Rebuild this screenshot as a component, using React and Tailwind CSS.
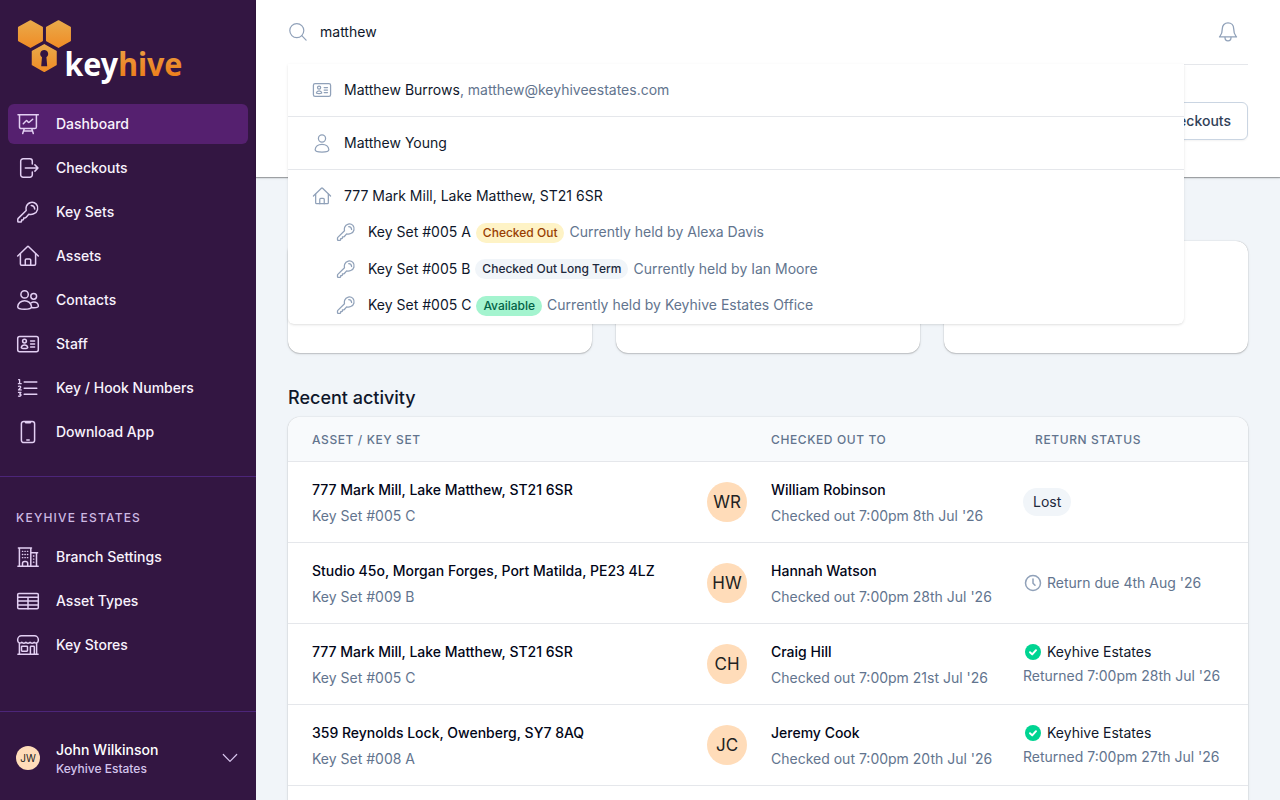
import React from "react";

const Icon = ({ className = "size-6", sw = 1.5, children }) => (
  <svg
    className={"shrink-0 " + className}
    viewBox="0 0 24 24"
    fill="none"
    stroke="currentColor"
    strokeWidth={sw}
    strokeLinecap="round"
    strokeLinejoin="round"
  >
    {children}
  </svg>
);

const shapes = {
  board: (
    <>
      <path d="M2 2.7h20.3M3.5 2.7v12.2a1.7 1.7 0 0 0 1.7 1.7h13.5a1.7 1.7 0 0 0 1.7-1.7V2.7" />
      <path d="M7.3 11.7l2.9-2.9a.5.5 0 0 1 .8 0l1.3 1.4a.6.6 0 0 0 .9 0l3.5-3" />
      <path d="M8.2 16.7l-1.5 4.8M15.8 16.7l1.5 4.8M7.6 18.9h8.8" />
    </>
  ),
  exit: (
    <>
      <path d="M16.3 8V5.2a2.4 2.4 0 0 0-2.4-2.4H7.1a2.4 2.4 0 0 0-2.4 2.4v13.6a2.4 2.4 0 0 0 2.4 2.4h6.8a2.4 2.4 0 0 0 2.4-2.4V16" />
      <path d="M9.3 12H22M18.9 8.9 22 12l-3.1 3.1" />
    </>
  ),
  key: (
    <>
      <path d="M20.3 4.1a6 6 0 0 0-9.9 2.2c-.5 1.400-.5 2.900-.2 4.200l-8 7.900a1.300 1.300 0 0 0-.4.900V21.400c0 .4.300.7.700.7h1.900a1.200 1.200 0 0 0 1.200-1.200v-.9h.9a1.200 1.200 0 0 0 1.200-1.200v-.9h1.100c.5 0 .9-.2 1.200-.5l2.800-3.200c1.700.4 3.500.2 4.900-.4a6.100 6.100 0 0 0 2.600-9.700z" />
      <path d="M15.300 5.600a3.600 3.600 0 0 1 3.400 3.400" />
    </>
  ),
  house: (
    <>
      <path d="M1.700 12 11.300 2.700a1 1 0 0 1 1.400 0L22.300 12" />
      <path d="M4.400 9.700v10.400a1.100 1.100 0 0 0 1.100 1.100h13a1.100 1.100 0 0 0 1.100-1.100V9.700" />
      <path d="M9.300 21.200v-5.100a1.200 1.200 0 0 1 1.200-1.200h3a1.200 1.200 0 0 1 1.200 1.200v5.100" />
    </>
  ),
  people: (
    <>
      <circle cx="8.600" cy="6.400" r="3.700" />
      <path d="M8.600 12.700c-3.700 0-6.600 2.600-6.900 6 0 1.400 3 2.500 6.900 2.500s6.900-1.100 6.900-2.500c-.3-3.400-3.200-6-6.900-6z" />
      <circle cx="17.700" cy="8.300" r="2.900" />
      <path d="M15 14.900c.8-.5 1.700-.8 2.700-.8 2.500 0 4.500 1.700 4.700 4 0 .9-1.900 1.700-4.400 1.700-.9 0-1.700-.1-2.400-.3" />
    </>
  ),
  idcard: (
    <>
      <rect x="1.700" y="4.400" width="20.600" height="15.300" rx="2" />
      <circle cx="8.500" cy="9.100" r="1.900" />
      <path d="M8.500 12.900c-1.700 0-2.900 1-3.200 2.500 0 .6 1.400 1 3.200 1s3.200-.4 3.200-1c-.3-1.500-1.500-2.500-3.200-2.500zM14.600 9h4M14.600 12h4M14.600 15h4" />
    </>
  ),
  numbers: (
    <>
      <path d="M8.200 6h12.600M8.200 12.200h12.600M8.200 18.300h12.600" />
      <path d="M2.600 3.700h1V7.600M2.400 7.700h2.800M2.500 10.300c1.900-.7 2.900.6 1.700 1.700L2.500 13.900h2.700M2.500 16.400h2.400L3.700 18.100c2 0 1.900 2.500-1.200 2.100" strokeWidth="1.300" />
    </>
  ),
  phone: (
    <>
      <rect x="5.400" y="1.400" width="13.200" height="21.200" rx="2.300" />
      <path d="M9.300 1.700c0 .9.500 1.100 1 1.100h3.400c.5 0 1-.2 1-1.100M10.800 20.100h2.400" />
    </>
  ),
  building: (
    <>
      <path d="M1.900 21.300h20.300M3.400 21.200V3M2.400 3h13.100M14.800 3v18.200M14.800 7.800h6.800M20.500 7.800v13.400" />
      <path d="M6.500 21.200v-2.800a1.900 1.900 0 0 1 1.900-1.900h1.400a1.900 1.900 0 0 1 1.900 1.900v2.800" />
      <path d="M6.400 6.300h.4M11.400 6.300h.4M6.400 9.500h.4M11.400 9.500h.4M6.400 12.700h.4M11.400 12.700h.4M8.900 6.300h.4M8.900 9.500h.4M8.900 12.700h.4M17.400 11h.5M17.400 14.100h.5M17.400 17.200h.5" strokeWidth="1.300" />
    </>
  ),
  table: (
    <>
      <rect x="1.700" y="4.400" width="20.600" height="15.300" rx="1.200" />
      <path d="M1.700 8.300h20.600M1.700 12.100h20.600M1.700 15.900h20.600M12 8.300v11.400" />
    </>
  ),
  store: (
    <>
      <path d="M1.900 21.200h20.200M3.400 21.200V10.400M20.600 21.200V10.400" />
      <path d="M5.500 2.800h13a3.800 3.800 0 0 1 3.800 3.800v1a2.400 2.400 0 0 1-4.100 1.700 3 3 0 0 1-4.100 0 3 3 0 0 1-4.200 0 3 3 0 0 1-4.100 0A2.400 2.400 0 0 1 1.700 7.600v-1a3.800 3.800 0 0 1 3.800-3.800z" />
      <rect x="5.500" y="13.200" width="6" height="5" rx=".6" />
      <path d="M14.400 21.200v-7.300c0-.4.300-.7.700-.7h2.500c.4 0 .7.300.7.700v7.300" />
    </>
  ),
  person: (
    <>
      <circle cx="12" cy="6.500" r="4.300" />
      <path d="M12 13.500c-4.600 0-8 2.600-8.200 6.600 0 1.500 3.700 2.700 8.200 2.700s8.200-1.200 8.200-2.700c-.2-4-3.600-6.600-8.200-6.600z" />
    </>
  ),
};

const NavItem = ({ icon, label, active }) => (
  <a
    className={
      "flex h-10 items-center gap-4 rounded-md px-2 text-sm font-medium text-[#f8f2fd] " +
      (active ? "bg-[#55206f]" : "")
    }
  >
    <Icon className="size-6 text-[#e3cff3]">{shapes[icon]}</Icon>
    {label}
  </a>
);

const Logo = () => (
  <svg className="block" width="176" height="72" viewBox="0 0 176 72">
    <defs>
      <linearGradient id="amber" x1="0" y1="0" x2="0" y2="1">
        <stop offset="0" stopColor="#e9aa4a" />
        <stop offset="1" stopColor="#f08c26" />
      </linearGradient>
      <linearGradient id="amberText" gradientUnits="userSpaceOnUse" x1="0" y1="36" x2="0" y2="64">
        <stop offset="0" stopColor="#ea9a3c" />
        <stop offset="1" stopColor="#ee7c18" />
      </linearGradient>
    </defs>
    <g fill="url(#amber)" stroke="url(#amber)" strokeWidth="1.500" strokeLinejoin="round">
      <path d="M14.500 5 26.200 11.500v13L14.500 31.200 2.700 24.500v-13z" />
      <path d="M42.500 5 54.200 11.500v13L42.500 31.200 30.700 24.500v-13z" />
      <path d="M28.300 28.800 40 35.300v13.400L28.300 55.300 16.500 48.700V35.300z" />
    </g>
    <path d="M28.200 34a4 4 0 0 1 2.200 7.300l.3 2.900.5 6h-6l.5-6 .3-2.900a4 4 0 0 1 2.200-7.300z" fill="#331642" />
    <text x="48.500" y="60" fontSize="31.500" textLength="118" lengthAdjust="spacingAndGlyphs" className="font-['Noto_Sans',sans-serif] font-bold">
      <tspan fill="#ffffff">key</tspan>
      <tspan fill="url(#amberText)">hive</tspan>
    </text>
  </svg>
);

const Sidebar = () => (
  <aside className="flex h-full w-64 shrink-0 flex-col bg-[#331642]">
    <div className="flex h-[104px] items-start pt-4 pl-4">
      <Logo />
    </div>
    <nav className="flex flex-col gap-1 px-2">
      <NavItem icon="board" label="Dashboard" active />
      <NavItem icon="exit" label="Checkouts" />
      <NavItem icon="key" label="Key Sets" />
      <NavItem icon="house" label="Assets" />
      <NavItem icon="people" label="Contacts" />
      <NavItem icon="idcard" label="Staff" />
      <NavItem icon="numbers" label="Key / Hook Numbers" />
      <NavItem icon="phone" label="Download App" />
    </nav>
    <div className="mt-6 border-t border-[#4c2579] px-2 pt-[33px]">
      <h3 className="px-2 text-xs leading-4 font-medium tracking-widest text-[#cdb9e2]">KEYHIVE ESTATES</h3>
      <nav className="mt-[11px] flex flex-col gap-1">
        <NavItem icon="building" label="Branch Settings" />
        <NavItem icon="table" label="Asset Types" />
        <NavItem icon="store" label="Key Stores" />
      </nav>
    </div>
    <div className="mt-auto flex h-[89px] items-center border-t border-[#4c2579] pt-1 pr-[18px] pl-4">
      <span className="flex size-6 items-center justify-center rounded-full bg-[#ffdcb9] text-[10px] text-[#222]">JW</span>
      <div className="ml-4 flex-1 pt-0.5">
        <p className="text-sm leading-5 font-medium text-white">John Wilkinson</p>
        <p className="text-xs leading-[18px] font-medium text-[#d3c4ec]">Keyhive Estates</p>
      </div>
      <svg className="text-[#d9c6ee]" width="16" height="10" viewBox="0 0 16 10" fill="none" stroke="currentColor" strokeWidth="1.200" strokeLinecap="round" strokeLinejoin="round">
        <path d="M1.300 1.500 8 8.300l6.700-6.800" />
      </svg>
    </div>
  </aside>
);

const KeyRow = ({ name, badge, tone, holder }) => (
  <div className="flex h-[36.500px] items-center">
    <Icon className="size-5 text-slate-400">{shapes.key}</Icon>
    <span className="ml-3">{name}</span>
    <span className={"mt-px ml-[5px] flex h-5 items-center rounded-full px-[7px] text-xs font-medium " + tone}>{badge}</span>
    <span className="ml-[5px] text-slate-500">Currently held by {holder}</span>
  </div>
);

const SearchResults = () => (
  <div className="absolute top-16 left-0 z-10 flex h-[260px] w-[896px] flex-col rounded-b-md bg-white text-sm text-slate-900 shadow">
    <div className="flex h-[53px] items-center gap-3 border-b border-gray-200 px-6">
      <Icon className="size-5 text-slate-400">{shapes.idcard}</Icon>
      <span>
        Matthew Burrows<span className="text-slate-500">, matthew@keyhiveestates.com</span>
      </span>
    </div>
    <div className="flex h-[53px] items-center gap-3 border-b border-gray-200 px-6">
      <Icon className="size-5 text-slate-400">{shapes.person}</Icon>
      <span>Matthew Young</span>
    </div>
    <div className="px-6 pt-2">
      <div className="flex h-9 items-center gap-3">
        <Icon className="size-5 text-slate-400">{shapes.house}</Icon>
        <span>777 Mark Mill, Lake Matthew, ST21 6SR</span>
      </div>
      <div className="flex flex-col pl-6">
        <KeyRow name="Key Set #005 A" badge="Checked Out" tone="bg-amber-100 text-amber-800" holder="Alexa Davis" />
        <KeyRow name="Key Set #005 B" badge="Checked Out Long Term" tone="bg-slate-100 text-slate-800" holder="Ian Moore" />
        <KeyRow name="Key Set #005 C" badge="Available" tone="bg-emerald-200 text-emerald-800" holder="Keyhive Estates Office" />
      </div>
    </div>
  </div>
);

const rows = [
  { asset: "777 Mark Mill, Lake Matthew, ST21 6SR", set: "Key Set #005 C", initials: "WR", person: "William Robinson", out: "8th Jul '26", status: "lost" },
  { asset: "Studio 45o, Morgan Forges, Port Matilda, PE23 4LZ", set: "Key Set #009 B", initials: "HW", person: "Hannah Watson", out: "28th Jul '26", status: "due" },
  { asset: "777 Mark Mill, Lake Matthew, ST21 6SR", set: "Key Set #005 C", initials: "CH", person: "Craig Hill", out: "21st Jul '26", status: "returned", back: "28th Jul '26" },
  { asset: "359 Reynolds Lock, Owenberg, SY7 8AQ", set: "Key Set #008 A", initials: "JC", person: "Jeremy Cook", out: "20th Jul '26", status: "returned", back: "27th Jul '26" },
];

const Status = ({ row }) => {
  if (row.status === "lost") {
    return <span className="rounded-full bg-slate-100 px-2.5 py-1 text-slate-800">Lost</span>;
  }
  if (row.status === "due") {
    return (
      <span className="flex items-center gap-1 text-slate-500">
        <svg className="size-5 text-slate-400" viewBox="0 0 20 20" fill="none" stroke="currentColor" strokeWidth="1.500" strokeLinecap="round">
          <circle cx="10" cy="10" r="7.500" />
          <path d="M10 6v4.200l2 2" />
        </svg>
        Return due 4th Aug '26
      </span>
    );
  }
  return (
    <div className="flex flex-col gap-1">
      <span className="flex items-center gap-1 text-slate-900">
        <svg className="size-5" viewBox="0 0 20 20">
          <circle cx="10" cy="10" r="8" fill="#00d492" />
          <path d="m7 10.300 2.200 2.100L13 8.200" fill="none" stroke="#fff" strokeWidth="2" strokeLinecap="round" strokeLinejoin="round" />
        </svg>
        Keyhive Estates
      </span>
      <span className="text-slate-500">Returned 7:00pm {row.back}</span>
    </div>
  );
};

const columns = "grid grid-cols-[395px_64px_252px_1fr] items-center px-6";
const raised = "bg-white shadow-[0_1px_3px_0_rgba(0,0,0,0.1),0_1px_1px_0_rgba(0,0,0,0.12),0_0_1px_0_rgba(0,0,0,0.3)]";

const Activity = () => (
  <section className={"h-[460px] overflow-hidden rounded-xl text-sm " + raised}>
    <div className={columns + " h-[45px] border-b border-gray-200 bg-slate-50 pt-0.5 text-xs font-medium tracking-wider text-slate-500"}>
      <span>ASSET / KEY SET</span>
      <span />
      <span>CHECKED OUT TO</span>
      <span className="pl-3">RETURN STATUS</span>
    </div>
    {rows.map((row, i) => (
      <div key={i} className={columns + " h-[81px] border-b border-gray-200"}>
        <div className="flex flex-col gap-1.5 pt-0.5">
          <span className="font-medium text-slate-950">{row.asset}</span>
          <span className="text-slate-500">{row.set}</span>
        </div>
        <span className="flex size-10 items-center justify-center rounded-full bg-[#ffdcb9] text-[17px] text-[#222]">{row.initials}</span>
        <div className="flex flex-col gap-1.5 pt-0.5">
          <span className="font-medium text-slate-950">{row.person}</span>
          <span className="text-slate-500">Checked out 7:00pm {row.out}</span>
        </div>
        <div className="flex">
          <Status row={row} />
        </div>
      </div>
    ))}
  </section>
);

export default function App() {
  return (
    <div className="flex h-[800px] w-[1280px] overflow-hidden bg-slate-100 font-['Inter',sans-serif] text-slate-900">
      <Sidebar />
      <main className="flex min-w-0 flex-1 flex-col">
        <header className="h-[177px] shrink-0 bg-white px-8 shadow-[0_1px_3px_0_rgba(0,0,0,0.1),0_1px_1px_0_rgba(0,0,0,0.3)]">
          <div className="relative flex h-[65px] items-center border-b border-gray-200">
            <svg className="size-5 text-slate-400" viewBox="0 0 20 20" fill="none" stroke="currentColor" strokeWidth="1.200" strokeLinecap="round">
              <circle cx="8.800" cy="8.600" r="7" />
              <path d="m13.800 13.700 4.300 4.400" />
            </svg>
            <span className="ml-3 flex-1 text-sm">matthew</span>
            <Icon className="mr-2 size-6 text-slate-400" sw={1.3}>
              <path d="M12 2.900c-3.300 0-5.700 2.500-5.700 5.800 0 5.600-1.500 6.600-2.800 8.200h17c-1.300-1.600-2.800-2.600-2.800-8.200 0-3.300-2.400-5.800-5.700-5.800z" />
              <path d="M9 17.500c0 2 1.200 3.300 3 3.300s3-1.300 3-3.300" />
            </Icon>
            <SearchResults />
          </div>
          <div className="flex h-[112px] items-center justify-end">
            <button className="h-[38px] rounded-md border border-slate-300 bg-white px-4 text-sm font-medium text-slate-700 shadow-xs">Checkouts</button>
          </div>
        </header>
        <div className="flex flex-1 flex-col px-8 pt-16">
          <div className="grid grid-cols-3 gap-6">
            <div className={"h-28 rounded-xl " + raised} />
            <div className={"h-28 rounded-xl " + raised} />
            <div className={"h-28 rounded-xl " + raised} />
          </div>
          <h2 className="mt-[31px] mb-[5px] text-lg leading-7 font-medium">Recent activity</h2>
          <Activity />
        </div>
      </main>
    </div>
  );
}
